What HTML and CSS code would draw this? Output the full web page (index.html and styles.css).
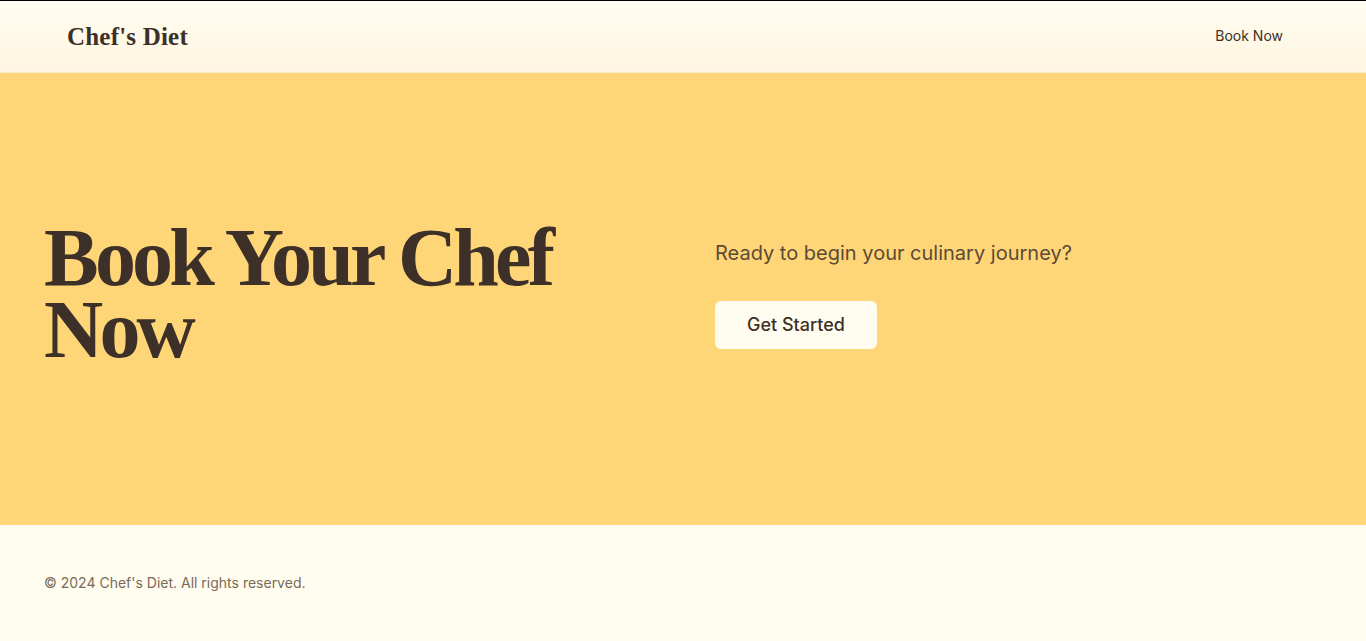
FILE: index.html
```html
<!DOCTYPE html>
<html lang="en">
<head>
<meta charset="utf-8">
<title>Chef's Diet</title>
<link rel="stylesheet" href="styles.css">
</head>
<body>
<header class="site-header">
  <div class="logo">Chef's Diet</div>
  <nav class="nav"><a class="nav-link" href="#">Book Now</a></nav>
</header>
<main class="hero">
  <div class="hero-left">
    <h1 class="hero-title">Book Your Chef Now</h1>
  </div>
  <div class="hero-right">
    <p class="hero-text">Ready to begin your culinary journey?</p>
    <a class="btn" href="#">Get Started</a>
  </div>
</main>
<footer class="site-footer">
  <p class="copy">© 2024 Chef's Diet. All rights reserved.</p>
</footer>
</body>
</html>
```

FILE: styles.css
```css
* { box-sizing: border-box; }
html, body { margin: 0; padding: 0; }
body {
  font-family: Inter, "Noto Sans", sans-serif;
  background: #fffdf0;
  color: #3d3029;
  border-top: 1px solid #000;
}
.site-header {
  height: 72px;
  display: flex;
  align-items: center;
  justify-content: space-between;
  padding: 0 83px 0 67px;
  background: linear-gradient(to bottom, #fffdf0, #fff5e0);
  border-bottom: 1px solid #fbeccb;
}
.logo {
  font-family: "Liberation Serif", "DejaVu Serif", serif;
  font-weight: 700;
  font-size: 25px;
  color: #3d3029;
  letter-spacing: 0.2px;
}
.nav {
  padding-bottom: 4px;
}
.nav-link {
  font-size: 14px;
  color: #3d3029;
  text-decoration: none;
}
.hero {
  height: 452px;
  background: #ffd677;
  display: grid;
  grid-template-columns: 1fr 1fr;
  column-gap: 64px;
  align-items: center;
  padding: 0 44px 11px;
}
.hero-title {
  margin: 0;
  font-family: "Liberation Serif", "DejaVu Serif", serif;
  font-weight: 700;
  font-size: 82px;
  line-height: 72px;
  letter-spacing: -3.8px;
  color: #3d3029;
}
.hero-right {
  display: flex;
  flex-direction: column;
  align-items: flex-start;
}
.hero-text {
  margin: 0 0 34px;
  font-size: 20px;
  line-height: 28px;
  color: #5c4a36;
}
.btn {
  display: inline-flex;
  align-items: center;
  justify-content: center;
  height: 48px;
  padding: 0 32px;
  background: #fffdf0;
  border-radius: 6px;
  font-size: 18px;
  font-weight: 500;
  color: #3d3029;
  text-decoration: none;
}
.site-footer {
  padding: 48px 44px;
}
.copy {
  margin: 0;
  font-size: 14px;
  line-height: 20px;
  color: #7a6a58;
}
```
